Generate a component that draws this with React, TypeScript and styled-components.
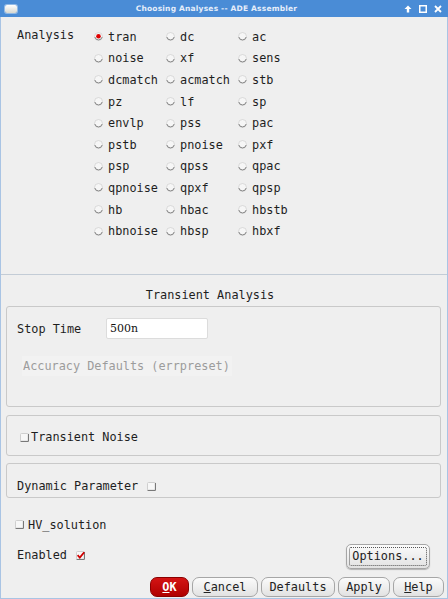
import React from "react";
import styled, { createGlobalStyle } from "styled-components";

const Global = createGlobalStyle`
  html, body { margin: 0; padding: 0; background: #efefef; }
  * { box-sizing: border-box; }
`;

const MONO = `"DejaVu Sans Mono", "Liberation Mono", monospace`;

const Window = styled.div`
  width: 448px;
  height: 599px;
  display: flex;
  flex-direction: column;
  font-family: ${MONO};
  font-size: 11.85px;
  color: #1e1e1e;
  background: #efefef;
  overflow: hidden;
`;

const TitleBar = styled.div`
  height: 17px;
  flex: none;
  background: #4a8cd6;
  display: flex;
  align-items: center;
  padding: 0 6px 0 5px;
`;

const AppIcon = styled.div`
  width: 12px;
  height: 8px;
  border-radius: 2px;
  background: linear-gradient(#ffffff, #d8d8d0);
  box-shadow: 0 0 0 1px rgba(255, 255, 255, 0.4);
`;

const TitleText = styled.div`
  flex: 1;
  text-align: center;
  color: #e6eefa;
  font-family: "DejaVu Sans", sans-serif;
  font-weight: bold;
  font-size: 7.5px;
  letter-spacing: 0.2px;
  padding-left: 12px;
`;

const TitleButtons = styled.div`
  display: flex;
  gap: 7px;
  align-items: center;
`;

const Body = styled.div`
  flex: 1;
  display: flex;
  flex-direction: column;
  border-left: 1px solid #a9c4e4;
  border-right: 1px solid #a9c4e4;
  border-bottom: 1px solid #a9c4e4;
`;

const AnalysisGrid = styled.div`
  display: grid;
  grid-template-columns: 77px 72px 72px 72px;
  grid-auto-rows: 21.6px;
  padding: 9px 0 0 16px;
`;

const GroupLabel = styled.div`
  grid-row: 1;
  grid-column: 1;
  display: flex;
  align-items: center;
  height: 21.6px;
  margin-top: -2px;
`;

const RadioItem = styled.label`
  display: flex;
  align-items: center;
  gap: 5px;
  white-space: nowrap;
`;

const Separator = styled.div`
  height: 1px;
  background: #c3ccd6;
  margin-top: 32px;
`;

const SectionTitle = styled.div`
  text-align: center;
  padding-right: 28px;
  margin-top: 13px;
  height: 17px;
`;

const Frame = styled.div<{ $h: number }>`
  margin: 0 6px 0 5px;
  height: ${(p) => p.$h}px;
  border: 1px solid #c9c9c9;
  border-radius: 3px;
`;

const TranFrame = styled(Frame)`
  margin-top: 1px;
  display: flex;
  flex-direction: column;
  padding: 11px 0 0 10px;
`;

const FieldRow = styled.div`
  display: flex;
  align-items: center;
  height: 22px;
`;

const FieldLabel = styled.div`
  width: 89px;
`;

const TextInput = styled.div`
  width: 102px;
  height: 21px;
  background: #ffffff;
  border: 1px solid #dcdcdc;
  border-radius: 2px;
  font-family: "DejaVu Serif", "Liberation Serif", serif;
  font-size: 11px;
  display: flex;
  align-items: center;
  padding-left: 3px;
  color: #111;
`;

const DisabledText = styled.div`
  margin-top: 16px;
  margin-left: 5px;
  width: 210px;
  padding: 3px 0 3px 1px;
  background: #f2f2f2;
  color: #9c9c9c;
`;

const NoiseFrame = styled(Frame)`
  margin-top: 8px;
  display: flex;
  align-items: center;
  padding: 4px 0 0 13px;
`;

const DynFrame = styled(Frame)`
  margin-top: 7px;
  display: flex;
  align-items: center;
  padding: 12px 0 0 10px;
  gap: 9px;
`;

const CheckRow = styled.div<{ $gap: number }>`
  display: flex;
  align-items: center;
  gap: ${(p) => p.$gap}px;
`;

const HVRow = styled(CheckRow)`
  margin: 20px 0 0 14px;
`;

const EnabledRow = styled.div`
  display: flex;
  align-items: center;
  margin: 12px 17px 0 16px;
  height: 25px;
`;

const EnabledLabel = styled(CheckRow)`
  flex: 1;
  margin-top: -2px;
`;

const Button = styled.button<{ $w: number; $primary?: boolean }>`
  width: ${(p) => p.$w}px;
  height: 20px;
  padding: 0;
  font-family: ${MONO};
  font-size: 11.85px;
  border-radius: 7px;
  border: 1px solid ${(p) => (p.$primary ? "#8a0000" : "#a6a6a6")};
  background: ${(p) =>
    p.$primary
      ? "linear-gradient(#d41414, #b00000)"
      : "linear-gradient(#fbfbfb, #e2e2e2)"};
  color: ${(p) => (p.$primary ? "#ffffff" : "#222")};
  font-weight: ${(p) => (p.$primary ? "bold" : "normal")};
  display: flex;
  align-items: center;
  justify-content: center;
`;

const OptionsButton = styled(Button)`
  height: 25px;
  border-radius: 5px;
  outline: 1px dotted #555;
  outline-offset: -4px;
  box-shadow: 0 1px 1px rgba(0, 0, 0, 0.25);
`;

const ButtonBar = styled.div`
  margin-top: auto;
  display: flex;
  justify-content: flex-end;
  gap: 3px;
  padding: 0 3px 1px 0;
`;

const U = styled.span`
  text-decoration: underline;
`;

const Radio = ({ on }: { on?: boolean }) => (
  <svg width="9" height="9" viewBox="0 0 9 9">
    <circle cx="4.5" cy="4.5" r="4" fill="#f6f6f6" stroke="#d2d2d2" strokeWidth="0.8" />
    <path d="M0.8 5 A3.8 3.8 0 0 0 8.2 5" fill="none" stroke="#7a7a7a" strokeWidth="0.9" />
    {on && <circle cx="4.5" cy="4.3" r="2.3" fill="#e00000" />}
  </svg>
);

const Check = ({ on }: { on?: boolean }) => (
  <svg width="9" height="9" viewBox="0 0 9 9">
    <rect x="0.5" y="0.5" width="8" height="8" rx="1" fill="#f7f7f7" stroke="#cfcfcf" />
    <path d="M0.6 8.4 H8.4 V1" fill="none" stroke="#6e6e6e" strokeWidth="1" />
    {on && (
      <path d="M1.6 4.2 L3.8 6.6 L8.2 1.2" fill="none" stroke="#d00000" strokeWidth="1.8" />
    )}
  </svg>
);

const rows = [
  ["tran", "dc", "ac"],
  ["noise", "xf", "sens"],
  ["dcmatch", "acmatch", "stb"],
  ["pz", "lf", "sp"],
  ["envlp", "pss", "pac"],
  ["pstb", "pnoise", "pxf"],
  ["psp", "qpss", "qpac"],
  ["qpnoise", "qpxf", "qpsp"],
  ["hb", "hbac", "hbstb"],
  ["hbnoise", "hbsp", "hbxf"],
];

export default function App() {
  return (
    <Window>
      <Global />
      <TitleBar>
        <AppIcon />
        <TitleText>Choosing Analyses -- ADE Assembler</TitleText>
        <TitleButtons>
          <svg width="8" height="8" viewBox="0 0 8 8">
            <path d="M4 0.5 L7.5 4 H5.2 V7.5 H2.8 V4 H0.5 Z" fill="#ffffff" />
          </svg>
          <svg width="8" height="8" viewBox="0 0 8 8">
            <rect x="0.75" y="0.75" width="6.5" height="6.5" fill="none" stroke="#ffffff" strokeWidth="1.5" />
          </svg>
          <svg width="8" height="8" viewBox="0 0 8 8">
            <path d="M1 1 L7 7 M7 1 L1 7" stroke="#ffffff" strokeWidth="1.8" />
          </svg>
        </TitleButtons>
      </TitleBar>
      <Body>
        <AnalysisGrid>
          <GroupLabel>Analysis</GroupLabel>
          {rows.map((r, ri) =>
            r.map((name, ci) => (
              <RadioItem key={name} style={{ gridRow: ri + 1, gridColumn: ci + 2 }}>
                <Radio on={name === "tran"} />
                {name}
              </RadioItem>
            ))
          )}
        </AnalysisGrid>
        <Separator />
        <SectionTitle>Transient Analysis</SectionTitle>
        <TranFrame $h={101}>
          <FieldRow>
            <FieldLabel>Stop Time</FieldLabel>
            <TextInput>500n</TextInput>
          </FieldRow>
          <DisabledText>Accuracy Defaults (errpreset)</DisabledText>
        </TranFrame>
        <NoiseFrame $h={41}>
          <CheckRow $gap={2}>
            <Check />
            Transient Noise
          </CheckRow>
        </NoiseFrame>
        <DynFrame $h={35}>
          Dynamic Parameter
          <Check />
        </DynFrame>
        <HVRow $gap={4}>
          <Check />
          HV_solution
        </HVRow>
        <EnabledRow>
          <EnabledLabel $gap={9}>
            Enabled
            <Check on />
          </EnabledLabel>
          <OptionsButton $w={84}>Options...</OptionsButton>
        </EnabledRow>
        <ButtonBar>
          <Button $w={39} $primary>
            <U>O</U>K
          </Button>
          <Button $w={66}>
            <U>C</U>ancel
          </Button>
          <Button $w={74}>Defaults</Button>
          <Button $w={52}>Apply</Button>
          <Button $w={51}>
            <U>H</U>elp
          </Button>
        </ButtonBar>
      </Body>
    </Window>
  );
}
